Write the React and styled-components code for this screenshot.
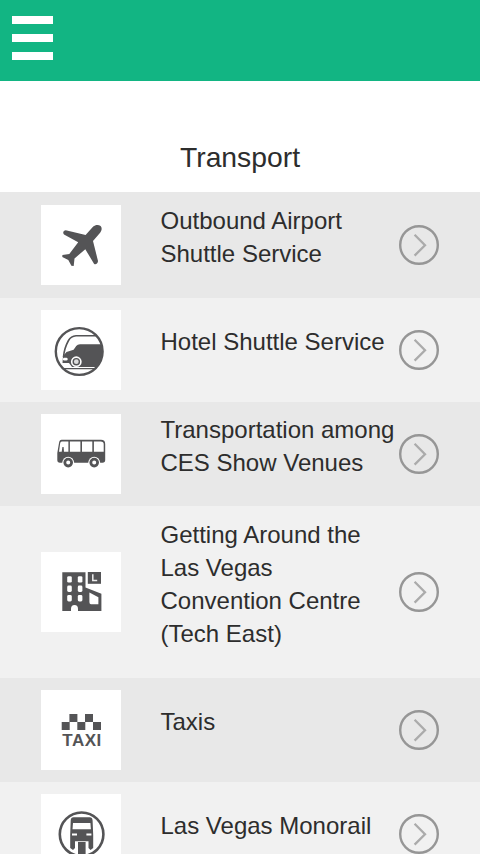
import React from 'react';
import styled, { createGlobalStyle } from 'styled-components';

const DARK = '#545456';

function PlaneIcon() {
    return (
        <svg width="80" height="80" viewBox="0 0 80 80" fill={DARK}>
            <path d="M52.2 21.6 C54.2 19.5 57.7 19.4 59.6 21 C61.5 23 60.6 26.2 58.7 28.2 L52 36 L57 56 C57 58 54.7 60.2 53 58.7 L44.3 44.2 L33.5 53.5 L32.7 61 L30.4 60.8 L27.3 55 L21.3 52 L21.4 50 L28.3 49.1 L37.2 37.2 L23 29.4 C21.2 27.8 22.8 25.2 24.8 25.2 L44.6 30 Z" />
        </svg>
    );
}

function ShuttleIcon() {
    return (
        <svg width="80" height="80" viewBox="0 0 80 80">
            <clipPath id="shuttle"><circle cx="38.2" cy="41.5" r="23" /></clipPath>
            <g clipPath="url(#shuttle)">
                <path d="M22.5 47 C23 40.5 25 35 27.5 30.5 Q30 26.2 35 25.8 L60 25.8" fill="none" stroke={DARK} strokeWidth="1.6" />
                <path d="M22 46 L25.5 42 L32.6 39.8 L35.2 36 Q36.5 34.2 39 34.2 L64 34.2 V57 H31 L28 53 H21.5 Z" fill={DARK} />
                <rect x="22" y="47.8" width="4.6" height="2.6" rx="1.2" fill="#fff" />
                <path d="M20 58.6 H60" stroke={DARK} strokeWidth="1.2" />
            </g>
            <circle cx="35.3" cy="51.7" r="4.6" fill={DARK} stroke="#fff" strokeWidth="1.6" />
            <circle cx="35.3" cy="51.7" r="2.4" fill="#ddd" />
            <circle cx="38.2" cy="41.5" r="23.4" fill="none" stroke={DARK} strokeWidth="2.4" />
        </svg>
    );
}

function BusIcon() {
    return (
        <svg width="80" height="80" viewBox="0 0 80 80">
            <path d="M20.6 25.8 H60 Q64.2 25.8 64.2 30 V46 Q64.2 48.8 61.5 48.8 H19 Q16.3 48.8 16.3 46 V39 L18 29 Q18.5 25.8 20.6 25.8 Z" fill={DARK} />
            <path d="M20.8 27.4 H27.4 V37.7 H23 L22.6 33 H21.4 L20.7 37.7 H18 L19.2 29 Q19.5 27.4 20.8 27.4 Z M28.9 27.4 H39.4 V37.7 H28.9 Z M41 27.4 H51.3 V37.7 H41 Z M52.9 27.4 H59.6 Q62.7 27.4 62.7 30.2 V37.7 H52.9 Z" fill="#fff" />
            {[27.2, 53.2].map((x) => (
                <g key={x}>
                    <circle cx={x} cy="48.6" r="5.9" fill="#fff" />
                    <circle cx={x} cy="48.6" r="3.4" fill="#fff" stroke={DARK} strokeWidth="2.8" />
                </g>
            ))}
        </svg>
    );
}

function BuildingIcon() {
    return (
        <svg width="80" height="80" viewBox="0 0 80 80">
            <path d="M21.3 20.3 H44.5 V35.5 L60.4 41.8 V59 H37 V57 Q37 53 33.5 53 Q30 53 30 57 V59 H21.3 Z" fill={DARK} />
            {[24.2, 33.6, 43].map((y) => (
                <g key={y} fill="#fff">
                    <rect x="26.2" y={y} width="4.6" height="6.4" rx="1.4" />
                    <rect x="36.8" y={y} width="4.6" height="6.4" rx="1.4" />
                </g>
            ))}
            <path d="M48.4 40.6 L57.4 45.2 V52.2 H50 Q48.4 52.2 48.4 50 Z" fill="#fff" />
            <rect x="46.8" y="20" width="13.2" height="11.8" fill={DARK} />
            <path d="M51.8 22.3 V28.5 H56.2" fill="none" stroke="#eee" strokeWidth="1.5" />
        </svg>
    );
}

function TaxiIcon() {
    return (
        <svg width="80" height="80" viewBox="0 0 80 80" fill={DARK}>
            {[28.4, 44].map((x) => <rect key={x} x={x} y="24" width="8" height="8" />)}
            {[20.7, 36.3, 52].map((x) => <rect key={x} x={x} y="32" width="8" height="8" />)}
            <text x="40.8" y="55.7" textAnchor="middle" textLength="39" fontFamily="Liberation Sans, Arial, sans-serif" fontSize="17" fontWeight="700">TAXI</text>
        </svg>
    );
}

function MonorailIcon() {
    return (
        <svg width="80" height="80" viewBox="0 0 80 80">
            <circle cx="40.6" cy="40.3" r="21.8" fill="none" stroke={DARK} strokeWidth="2.6" />
            <path d="M32.5 23.3 H48.7 Q51.3 23.3 51.6 26.5 L52.2 41 V54 L49.5 56 L47.5 54 V47.3 H34 V54 L32 56 L29.2 54 V41 L29.7 26.5 Q30 23.3 32.5 23.3 Z" fill={DARK} />
            <path d="M32 29 H49.4 L49.9 35.2 H31.5 Z" fill="#fff" />
            <path d="M31 39.4 H36 V41.6 H31 Z M45.4 39.4 H50.4 V41.6 H45.4 Z" fill="#fff" />
            <rect x="37" y="48" width="7.6" height="14" fill={DARK} />
        </svg>
    );
}

const services = [
    { title: 'Outbound Airport Shuttle Service', Icon: PlaneIcon, height: 106 },
    { title: 'Hotel Shuttle Service', Icon: ShuttleIcon, height: 104 },
    { title: 'Transportation among CES Show Venues', Icon: BusIcon, height: 104 },
    { title: 'Getting Around the Las Vegas Convention Centre (Tech East)', Icon: BuildingIcon, height: 172 },
    { title: 'Taxis', Icon: TaxiIcon, height: 104 },
    { title: 'Las Vegas Monorail', Icon: MonorailIcon, height: 104 },
];

function App() {
    return (
        <>
            <GlobalStyle />
            <Page>
                <Header>
                    <MenuButton aria-label="Menu">
                        <span />
                        <span />
                        <span />
                    </MenuButton>
                </Header>
                <Title>Transport</Title>
                <List>
                    {services.map(({ title, Icon, height }) => (
                        <Row key={title} $height={height}>
                            <IconBox><Icon /></IconBox>
                            <Label>{title}</Label>
                            <Arrow viewBox="0 0 40 40">
                                <circle cx="20" cy="20" r="18.8" stroke="#969696" strokeWidth="2.4" />
                                <path d="M15.6 9.8 L26 20.2 L15.6 30.6" stroke="#ababab" strokeWidth="2.3" />
                            </Arrow>
                        </Row>
                    ))}
                </List>
            </Page>
        </>
    );
}

export default App;

const GlobalStyle = createGlobalStyle`
    * {
        margin: 0;
        padding: 0;
        box-sizing: border-box;
    }

    body {
        background-color: #FFFFFF;
        font-family: "Liberation Sans", Arial, sans-serif;
        color: #2d2d2d;
    }
`;

const Page = styled.div`
    width: 100%;
    height: 854px;
    overflow: hidden;
`;

const Header = styled.header`
    height: 81px;
    padding: 16px 12px;
    background-color: #12B583;
`;

const MenuButton = styled.button`
    display: flex;
    flex-direction: column;
    gap: 10px;
    width: 41px;
    border: none;
    background: none;
    cursor: pointer;

    span {
        height: 8px;
        width: 100%;
        background-color: #FFFFFF;
    }
`;

const Title = styled.h1`
    height: 111px;
    padding-top: 60px;
    font-size: 28.3px;
    font-weight: 400;
    line-height: 32px;
    text-align: center;
`;

const List = styled.ul`
    list-style-type: none;
`;

const Row = styled.li`
    display: flex;
    align-items: center;
    height: ${(props) => props.$height}px;
    padding: 0 41px;
    background-color: #F1F1F1;
    cursor: pointer;

    &:nth-child(odd) {
        background-color: #E8E8E8;
    }
`;

const IconBox = styled.div`
    flex: none;
    width: 80px;
    height: 80px;
    background-color: #FFFFFF;

    svg {
        display: block;
    }
`;

const Label = styled.p`
    flex: none;
    width: 238px;
    margin-left: 39.5px;
    margin-right: 0.5px;
    padding-bottom: 17px;
    font-size: 24px;
    line-height: 33px;
`;

const Arrow = styled.svg`
    flex: none;
    width: 40px;
    height: 40px;
    fill: none;
`;
